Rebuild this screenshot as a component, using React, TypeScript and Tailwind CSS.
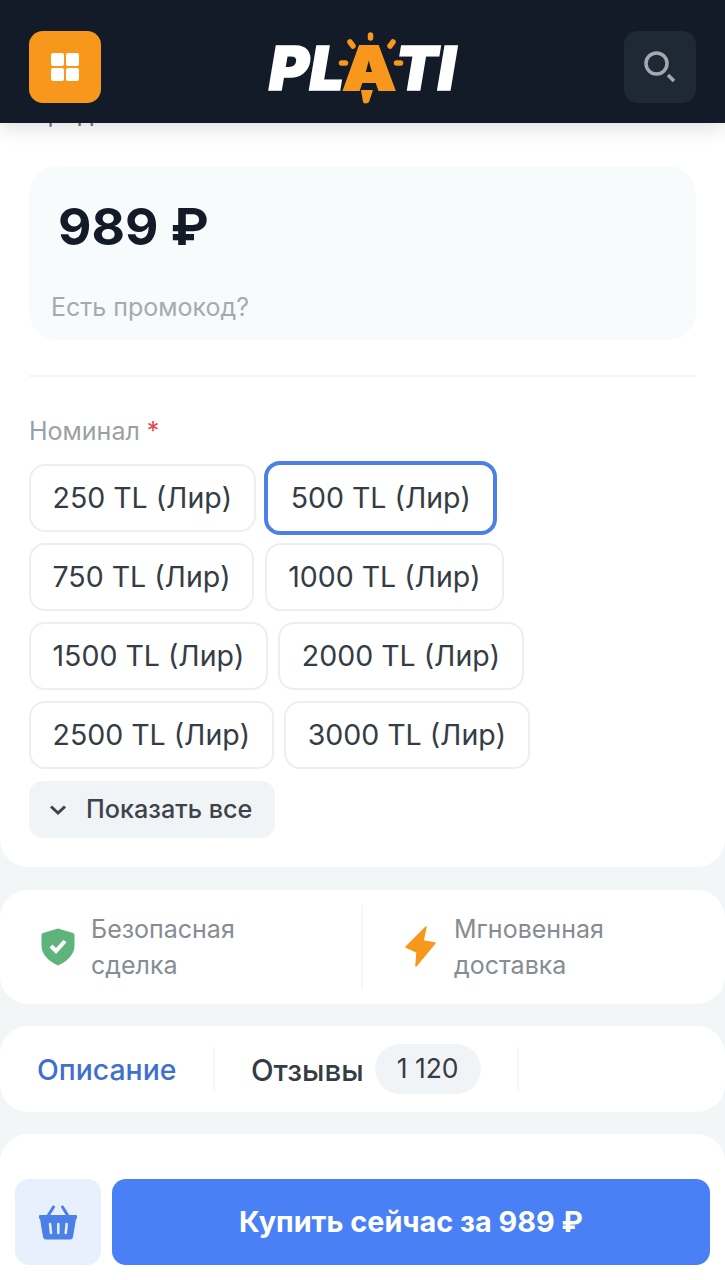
const nominals = [
  [
    { label: "250 TL (Лир)" },
    { label: "500 TL (Лир)", active: true },
  ],
  [{ label: "750 TL (Лир)" }, { label: "1000 TL (Лир)" }],
  [{ label: "1500 TL (Лир)" }, { label: "2000 TL (Лир)" }],
  [{ label: "2500 TL (Лир)" }, { label: "3000 TL (Лир)" }],
];

function Logo() {
  return (
    <div className="relative flex h-[86px] w-[190px] items-center justify-center pt-[2px] font-['Inter',sans-serif] text-[61px] leading-none font-black tracking-[0.5px] whitespace-nowrap text-white">
      <span className="italic [-webkit-text-stroke:1.5px_white]">PL</span>
      <span className="mx-[1px] inline-block scale-x-110 text-[#f7981d] [-webkit-text-stroke:2px_#f7981d]">A</span>
      <span className="italic [-webkit-text-stroke:1.5px_white]">TI</span>
      <svg className="absolute top-0 left-0" width="190" height="86" viewBox="0 0 190 86" fill="none">
        <path d="M93 66 L105 66 L101 78 Q97 81 95 78 Z" fill="#f7981d" />
        <g stroke="#f7981d" strokeLinecap="round" strokeWidth="5.5">
          <path d="M102.500 11 L102.500 14" />
          <path d="M82 18 L85 22" />
          <path d="M125 18 L122 22" />
          <path d="M73.500 39 L77.500 39" />
          <path d="M128.500 39 L132.500 39" />
        </g>
      </svg>
    </div>
  );
}

function Header() {
  return (
    <header className="relative z-10 flex h-[123px] items-center justify-between bg-[#131a28] px-[29px] pt-[11px] shadow-[0_5px_18px_rgba(19,26,40,0.14)]">
      <button className="flex h-[72px] w-[72px] items-center justify-center rounded-[14px] bg-[#f7981d]">
        <div className="grid grid-cols-2 gap-[2px]">
          <span className="h-[13px] w-[13px] rounded-[2px] bg-white" />
          <span className="h-[13px] w-[13px] rounded-[2px] bg-white" />
          <span className="h-[13px] w-[13px] rounded-[2px] bg-white" />
          <span className="h-[13px] w-[13px] rounded-[2px] bg-white" />
        </div>
      </button>
      <Logo />
      <button className="flex h-[72px] w-[72px] items-center justify-center rounded-[14px] bg-[#1f2935]">
        <svg width="32" height="32" viewBox="0 0 32 32" fill="none">
          <circle cx="12.500" cy="12.500" r="10.500" stroke="#a3a9b1" strokeWidth="3.500" />
          <path d="M24 24 L30 30" stroke="#a3a9b1" strokeWidth="3.500" />
        </svg>
      </button>
    </header>
  );
}

function NominalCard() {
  return (
    <section className="rounded-b-[28px] bg-white px-[29px] pb-[29px]">
      <div className="-mt-[26px] h-[32px] text-[25px] leading-[32px] text-[#6b7280]">Продано</div>
      <div className="mt-[37px] h-[174px] rounded-[28px] bg-[#f8fbfc] px-[22px] pt-[30px]">
        <div className="pl-[7px] text-[51.5px] leading-[60px] font-bold text-[#131a28]">989 ₽</div>
        <div className="mt-[35px] text-[25px] leading-[32px] text-[#a4abb0]">Есть промокод?</div>
      </div>
      <div className="mt-[35px] h-[2px] bg-[#f3f5f6]" />
      <div className="mt-[38px] text-[25px] leading-[32px] text-[#9aa1a6]">
        Номинал <span className="text-[#e5484d]">*</span>
      </div>
      <div className="mt-[17px] flex flex-col gap-[11px]">
        {nominals.map((row, i) => (
          <div key={i} className="flex h-[68px] items-center gap-[10.5px]">
            {row.map((item) => (
              <button
                key={item.label}
                className={
                  item.active
                    ? "-ml-[2px] h-[74px] rounded-[16px] border-4 border-[#4a80e8] bg-white px-[22.5px] text-[28.5px] whitespace-nowrap text-[#363c44]"
                    : "h-[68px] rounded-[16px] border-2 border-[#eceef0] bg-white px-[21.5px] text-[28.5px] whitespace-nowrap text-[#363c44]"
                }
              >
                {item.label}
              </button>
            ))}
          </div>
        ))}
      </div>
      <button className="mt-[12px] flex h-[57px] w-[246px] items-center gap-[19px] rounded-[14px] bg-[#f1f4f6] pl-[20px] text-[25.2px] font-medium text-[#3d434b]">
        <svg width="18" height="12" viewBox="0 0 18 12" fill="none">
          <path d="M2 2.500 L9 9 L16 2.500" stroke="#3d434b" strokeWidth="3" />
        </svg>
        Показать все
      </button>
    </section>
  );
}

function TrustCard() {
  return (
    <section className="mt-[23px] flex h-[114px] items-center rounded-[28px] bg-white">
      <div className="flex h-[84px] w-[363px] items-center gap-[16px] border-r-2 border-[#f5f7f8] pl-[41px]">
        <svg width="34" height="38" viewBox="0 0 34 38" fill="none">
          <path d="M17 0.500 L32 5 Q33.500 5.500 33.500 7 V18 C33.500 27 25 34 17 37.500 C9 34 0.500 27 0.500 18 V7 Q0.500 5.500 2 5 Z" fill="#5fb47e" />
          <path d="M10 18 L15 23 L24 13" stroke="white" strokeWidth="4" />
        </svg>
        <div className="text-[25px] leading-[36px] text-[#868c92]">
          Безопасная
          <br />
          сделка
        </div>
      </div>
      <div className="flex h-[84px] items-center gap-[17px] pl-[42px]">
        <svg width="32" height="42" viewBox="0 0 32 42" fill="#f7981d">
          <path d="M21 1 L1 21 L12 26 L11 40 L30 17 L18 15 Z" stroke="#f7981d" strokeWidth="1.500" strokeLinejoin="round" />
        </svg>
        <div className="text-[25px] leading-[36px] text-[#868c92]">
          Мгновенная
          <br />
          доставка
        </div>
      </div>
    </section>
  );
}

function TabsCard() {
  return (
    <section className="mt-[22px] flex h-[86px] items-center rounded-[28px] bg-white">
      <div className="flex h-[44px] w-[215px] items-center border-r-2 border-[#f5f7f8] pt-[2px] pl-[37px] text-[28.4px] font-medium text-[#3f70d0]">
        Описание
      </div>
      <div className="flex h-[44px] w-[304px] items-center gap-[11px] border-r-2 border-[#f5f7f8] pl-[36px] text-[29.500px] font-medium text-[#363c44]">
        <span className="pt-[2px]">Отзывы</span>
        <span className="flex h-[50px] w-[106px] items-center justify-center rounded-full bg-[#f1f4f6] text-[26.500px] font-normal">
          1 120
        </span>
      </div>
    </section>
  );
}

function BuyBar() {
  return (
    <div className="absolute inset-x-0 bottom-0 flex h-[117px] gap-[11px] rounded-t-[10px] bg-white/95 px-[15px] pt-[16px]">
      <button className="flex h-[86px] w-[86px] shrink-0 items-center justify-center rounded-[14px] bg-[#e9f0fd]">
        <svg width="38" height="35" viewBox="0 0 38 35" fill="none">
          <path d="M1 10 H37 Q38 10 38 11 V13 Q38 14 37 14 L34 32 Q33.500 34.500 31 34.500 H7 Q4.500 34.500 4 32 L1 14 Q0 14 0 13 V11 Q0 10 1 10 Z" fill="#4a80e8" />
          <path d="M9.500 10 L14.500 2 M28.500 10 L23.500 2" stroke="#4a80e8" strokeWidth="3" strokeLinecap="round" />
          <path d="M11 19 L12 28 M19.300 19 V28 M27.700 19 L26.700 28" stroke="#e9f0fd" strokeWidth="2.500" strokeLinecap="round" />
        </svg>
      </button>
      <button className="flex h-[86px] flex-1 items-center justify-center rounded-[14px] bg-[#4a80f5] text-[28.8px] font-bold text-white">
        Купить сейчас за 989 ₽
      </button>
    </div>
  );
}

export default function App() {
  return (
    <div className="relative h-[1280px] overflow-hidden bg-[#f3f6f7] font-['Inter',sans-serif]">
      <Header />
      <NominalCard />
      <TrustCard />
      <TabsCard />
      <section className="mt-[22px] h-[200px] rounded-[28px] bg-white" />
      <BuyBar />
    </div>
  );
}
